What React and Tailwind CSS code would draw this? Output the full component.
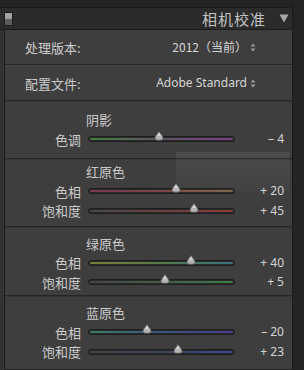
import React from 'react';

const CJK = { fontFamily: '"Noto Sans CJK SC", "Noto Sans", sans-serif' };
const LATIN = { fontFamily: '"Noto Sans", "Noto Sans CJK SC", sans-serif' };

const sections = [
  {
    title: '阴影',
    pad: 'pt-[8px] pb-[9px]',
    rows: [{ label: '色调', value: '– 4', v: -4, track: 'bg-gradient-to-r from-[#3c7d38] via-[#5e5262] to-[#7c3a8a]' }],
  },
  {
    title: '红原色',
    pad: 'pt-[2px] pb-[5px]',
    rows: [
      { label: '色相', value: '+ 20', v: 20, track: 'bg-gradient-to-r from-[#7c3a55] via-[#7c4444] to-[#7c6244]' },
      { label: '饱和度', value: '+ 45', v: 45, track: 'bg-gradient-to-r from-[#444444] to-[#8c3838]' },
    ],
  },
  {
    title: '绿原色',
    pad: 'pt-[6px] pb-[3px]',
    rows: [
      { label: '色相', value: '+ 40', v: 40, track: 'bg-gradient-to-r from-[#7c7c38] via-[#527c46] to-[#387080]' },
      { label: '饱和度', value: '+ 5', v: 5, track: 'bg-gradient-to-r from-[#444444] to-[#3a7c46]' },
    ],
  },
  {
    title: '蓝原色',
    pad: 'pt-[6px] pb-[7px]',
    rows: [
      { label: '色相', value: '– 20', v: -20, track: 'bg-gradient-to-r from-[#387c62] via-[#38527c] to-[#46388c]' },
      { label: '饱和度', value: '+ 23', v: 23, track: 'bg-gradient-to-r from-[#444444] to-[#38468c]' },
    ],
  },
];

function UpDown() {
  return (
    <svg width="6" height="9" viewBox="0 0 6 9" className="ml-[3px] shrink-0">
      <path d="M3 0.5 L5.5 3.5 H0.5 Z" fill="#9a9a9a" />
      <path d="M3 8.5 L5.5 5.5 H0.5 Z" fill="#9a9a9a" />
    </svg>
  );
}

function Thumb() {
  return (
    <svg width="11" height="10" viewBox="0 0 11 10">
      <path d="M5.5 0.5 L9.5 6 Q10 9 7.5 9.2 H3.5 Q1 9 1.5 6 Z" fill="#b4b4b4" stroke="#5a5a5a" strokeWidth="0.8" />
      <path d="M5.5 1.5 L7.5 5 H3.5 Z" fill="#d8d8d8" />
    </svg>
  );
}

function Slider({ label, value, v, track }) {
  const pct = ((v + 100) / 200) * 100;
  return (
    <div className="flex h-[19.5px] items-center">
      <div className="w-[76px] text-right text-[13px] leading-none text-[#cbcbcb]" style={CJK}>
        {label}
      </div>
      <div className="relative ml-[7px] h-[6px] w-[147px] rounded-full border border-[#1e1e1e] bg-[#2a2a2a]">
        <div className={`absolute inset-[1px] rounded-full ${track}`} />
        <div className="absolute top-[-6px] -translate-x-1/2" style={{ left: `${pct}%` }}>
          <Thumb />
        </div>
      </div>
      <div className="w-[49px] text-right text-[12px] leading-none text-[#d4d4d4]" style={LATIN}>
        {value}
      </div>
    </div>
  );
}

function Separator() {
  return <div className="h-[2px] border-t border-[#262626] bg-[#353535]" />;
}

export default function App() {
  return (
    <div className="relative flex h-[370px] w-[304px] overflow-hidden bg-[#262626]">
      <div className="flex w-[292px] flex-col">
        <div className="h-[8px] border-b border-[#1a1a1a] bg-[#232323]" />
        <div className="flex h-[21px] items-center bg-[#2b2b2b] pl-[4px] pr-[3px]">
          <div className="flex h-[14px] w-[9px] flex-col border border-[#1c1c1c]">
            <div className="h-1/2 bg-[#a0a0a0]" />
            <div className="h-1/2 bg-[#5c5c5c]" />
          </div>
          <div className="flex-1" />
          <div className="text-[15px] leading-none tracking-[1px] text-[#c2c2c2]" style={CJK}>
            相机校准
          </div>
          <svg width="10" height="9" viewBox="0 0 10 9" className="ml-[13px]">
            <path d="M0.5 0.5 H9.5 L5 8.5 Z" fill="#a8a8a8" />
          </svg>
        </div>
        <div className="h-[1px] bg-[#1c1c1c]" />
        <div className="flex flex-1 border-l-[4px] border-[#333333]">
          <div className="flex flex-1 flex-col border-l border-[#1e1e1e] bg-[#3e3e3e]">
            <div className="flex h-[34px] items-center pl-[20px] pr-[36px]">
              <div className="text-[13px] leading-none text-[#cbcbcb]" style={CJK}>处理版本:</div>
              <div className="flex-1" />
              <div className="text-[12px] leading-none text-[#d6d6d6]" style={CJK}>2012（当前）</div>
              <UpDown />
            </div>
            <div className="h-[2px] border-t border-[#282828] bg-[#444444]" />
            <div className="flex h-[34px] items-center pl-[20px] pr-[36px]">
              <div className="text-[13px] leading-none text-[#cbcbcb]" style={CJK}>配置文件:</div>
              <div className="flex-1" />
              <div className="text-[12px] leading-none text-[#d6d6d6]" style={LATIN}>Adobe Standard</div>
              <UpDown />
            </div>
            {sections.map(s => (
              <div key={s.title}>
                <Separator />
                <div className={s.pad}>
                  <div className="flex h-[19.5px] items-center pl-[81px] text-[13px] leading-none text-[#cbcbcb]" style={CJK}>
                    {s.title}
                  </div>
                  {s.rows.map(r => (
                    <Slider key={r.label} {...r} />
                  ))}
                </div>
              </div>
            ))}
            <div className="flex-1 border-t border-[#262626] bg-[#333333]" />
          </div>
        </div>
      </div>
      <div className="w-[12px] border-l border-[#1a1a1a] bg-[#242424]" />
      <div className="pointer-events-none absolute left-[176px] top-[152px] h-[40px] w-[114px] bg-gradient-to-b from-white/[0.07] to-white/[0.02]" />
    </div>
  );
}
